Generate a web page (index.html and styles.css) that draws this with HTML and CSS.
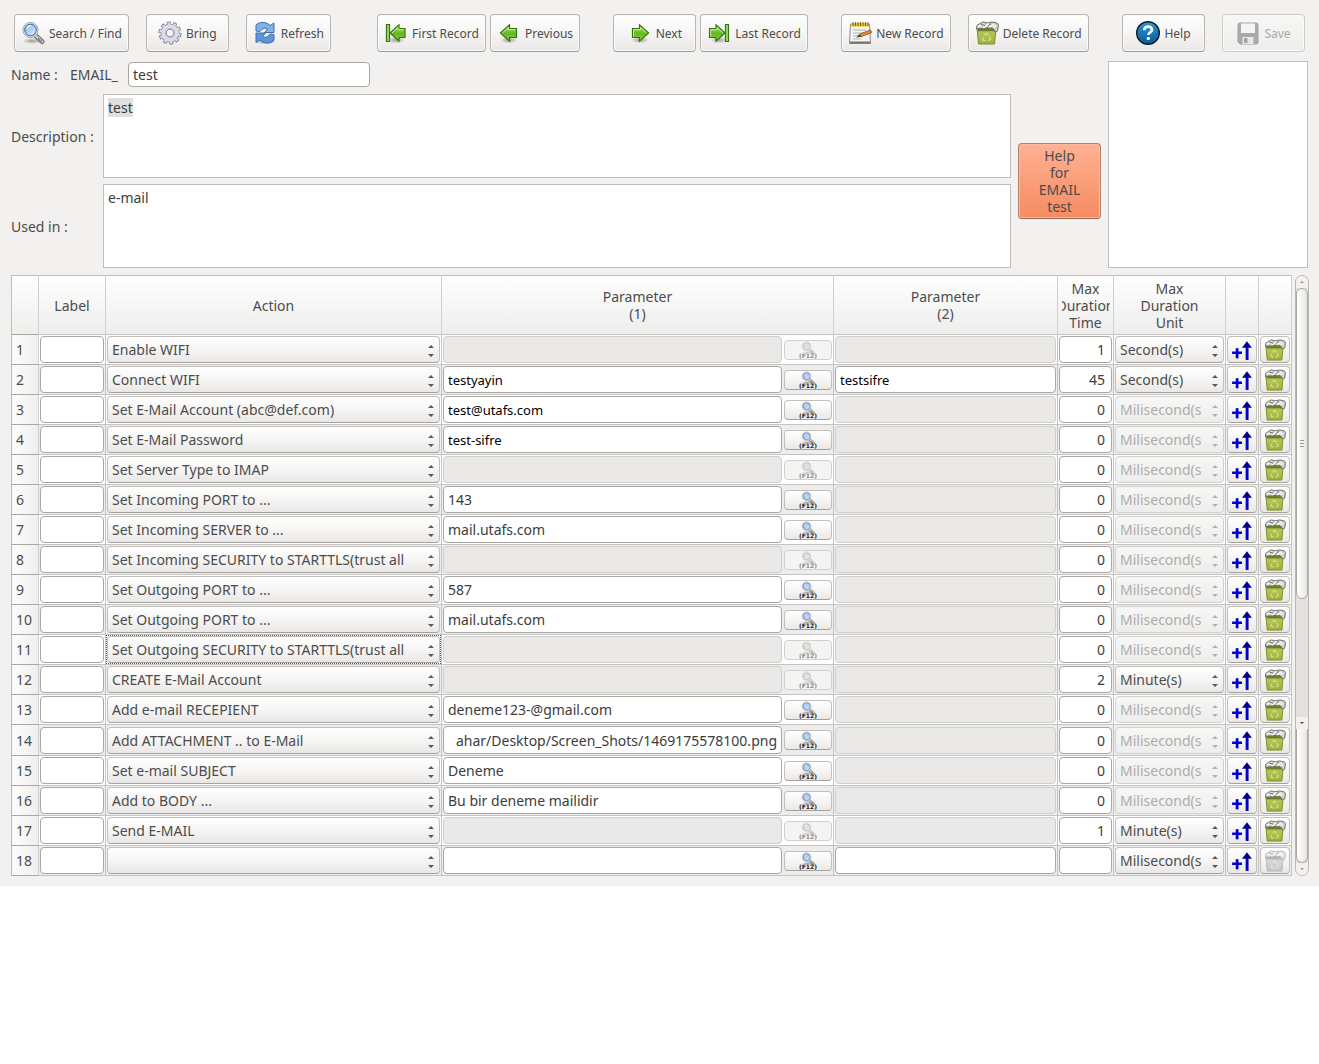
FILE: index.html
```html
<!DOCTYPE html>
<html lang="en">

<head>
    <meta charset="UTF-8">
    <meta name="viewport" content="width=device-width, initial-scale=1.0">
    <title>EMAIL_test</title>
    <link rel="stylesheet" href="styles.css">
</head>

<body>
    <svg class="sprite" aria-hidden="true">
        <defs>
            <linearGradient id="lens" x1="0" y1="0" x2="1" y2="1">
                <stop offset="0" stop-color="#7fb2ea" />
                <stop offset="1" stop-color="#e4f1ff" />
            </linearGradient>
            <linearGradient id="green" x1="0" y1="0" x2="0" y2="1">
                <stop offset="0" stop-color="#a9dc75" />
                <stop offset="0.55" stop-color="#62b81f" />
                <stop offset="1" stop-color="#8fd64e" />
            </linearGradient>
            <linearGradient id="bin" x1="0" y1="0" x2="0" y2="1">
                <stop offset="0" stop-color="#76932a" />
                <stop offset="0.3" stop-color="#b4c552" />
                <stop offset="1" stop-color="#a0b03c" />
            </linearGradient>
            <linearGradient id="blue" x1="0" y1="0" x2="0" y2="1">
                <stop offset="0" stop-color="#2c9bd8" />
                <stop offset="1" stop-color="#0a5797" />
            </linearGradient>
            <radialGradient id="shade">
                <stop offset="0" stop-color="#000" stop-opacity="0.35" />
                <stop offset="1" stop-color="#000" stop-opacity="0" />
            </radialGradient>
        </defs>
        <symbol id="search" viewBox="0 0 24 24">
            <ellipse cx="11" cy="20" rx="10" ry="3" fill="url(#shade)" />
            <path d="M14.5 14.5L21 20.5" stroke="#6e6e6e" stroke-width="5" stroke-linecap="round" />
            <path d="M14.5 14.5L21 20.5" stroke="#c4c4c4" stroke-width="3" stroke-linecap="round" />
            <path d="M17 17.5l3.5 3.2" stroke="#8b8b8b" stroke-width="2" />
            <circle cx="9.5" cy="9" r="7.6" fill="#f2f2f2" stroke="#a5a5a5" />
            <circle cx="9.5" cy="9" r="5.8" fill="url(#lens)" stroke="#4a7cb8" stroke-width="1.2" />
            <path d="M6 8a4 4 0 0 1 4-3.3" fill="none" stroke="#fff" stroke-width="1.2" />
        </symbol>
        <symbol id="gear" viewBox="0 0 24 24">
            <g fill="none">
                <circle cx="12" cy="12" r="9.4" stroke="#85859a" stroke-width="4.4" pathLength="20" stroke-dasharray="1.2 0.8" />
                <circle cx="12" cy="12" r="6.4" stroke="#85859a" stroke-width="6.4" />
                <circle cx="12" cy="12" r="6.4" stroke="#dcdce9" stroke-width="4.8" />
                <circle cx="12" cy="12" r="9.2" stroke="#dcdce9" stroke-width="2.8" pathLength="20" stroke-dasharray="0.8 1.2" stroke-dashoffset="-0.2" />
                <circle cx="12" cy="12" r="4.6" stroke="#b9b9ca" />
            </g>
        </symbol>
        <symbol id="refresh" viewBox="0 0 24 24">
            <ellipse cx="12" cy="21" rx="10" ry="2.5" fill="url(#shade)" />
            <path d="M3 10V4l2-1.500c3-1.500 7-1.500 10 .3L17 4.500 21 2v9.500h-9.500l3-3.500c-2-1.300-4-.8-5.500.3L7 10.500z" fill="#86b0e2" stroke="#3a6fb2" />
            <path d="M21 13.500v6l-2 1.500c-3 1.500-7 1.500-10-.3L7 19l-4 2.500V12h9.500l-3 3.500c2 1.300 4 .8 5.500-.3l2-2.200z" fill="#6196d6" stroke="#3a6fb2" />
        </symbol>
        <symbol id="prev" viewBox="0 0 24 24">
            <ellipse cx="12" cy="19" rx="9" ry="3.500" fill="url(#shade)" />
            <path d="M3.500 12L12.500 3.800V7.500h7v9h-7v3.700z" fill="url(#green)" stroke="#37750a" stroke-width="1.200" />
            <path d="M5.400 12l6-5.500v2.200h7" fill="none" stroke="#c9ecab" />
        </symbol>
        <symbol id="next" viewBox="0 0 24 24">
            <ellipse cx="12" cy="19" rx="9" ry="3.500" fill="url(#shade)" />
            <path d="M20.500 12L11.500 3.800V7.500h-7v9h7v3.700z" fill="url(#green)" stroke="#37750a" stroke-width="1.200" />
            <path d="M5.600 15.500V8.700h7V6.500l6 5.500" fill="none" stroke="#c9ecab" />
        </symbol>
        <symbol id="first" viewBox="0 0 24 24">
            <ellipse cx="12" cy="19" rx="9" ry="3.500" fill="url(#shade)" />
            <path d="M6 12L15 3.800V7.500h6v9h-6v3.700z" fill="url(#green)" stroke="#37750a" stroke-width="1.200" />
            <path d="M7.900 12l6-5.500v2.200h6" fill="none" stroke="#c9ecab" />
            <path d="M2.500 3.500h3v17h-3z" fill="#a5dc73" stroke="#37750a" stroke-width="1.200" />
        </symbol>
        <symbol id="last" viewBox="0 0 24 24">
            <ellipse cx="12" cy="19" rx="9" ry="3.500" fill="url(#shade)" />
            <path d="M18 12L9 3.800V7.500H2.500v9H9v3.700z" fill="url(#green)" stroke="#37750a" stroke-width="1.200" />
            <path d="M3.700 15.500V8.700h6.500V6.500l6 5.500" fill="none" stroke="#c9ecab" />
            <path d="M18.500 3.500h3v17h-3z" fill="#a5dc73" stroke="#37750a" stroke-width="1.200" />
        </symbol>
        <symbol id="new" viewBox="0 0 24 24">
            <path d="M2.500 3h19l1 19.500h-21z" fill="#f4f4f2" stroke="#8d8d89" />
            <path d="M2 21.500h20.500" stroke="#74746f" stroke-width="2" />
            <path d="M3.500 2h17v3.500h-17z" fill="#dfc12c" />
            <path d="M5 1v4M7.500 1v4M10 1v4M12.500 1v4M15 1v4M17.500 1v4M20 1v4" stroke="#8a6d00" />
            <path d="M5 9h13M5 12h9M5 15h5M5 18h8" stroke="#b4b4b0" />
            <path d="M9.500 15l3-2.300L22.500 9l1.200 2.600-10.500 4z" fill="#e08b3a" stroke="#8a4a14" stroke-width="0.800" />
            <path d="M8 16.800l4-3.300 1.200 2z" fill="#4a3a2c" />
        </symbol>
        <symbol id="trash" viewBox="0 0 24 24">
            <path d="M2 7h19l-1.500 16h-16z" fill="url(#bin)" stroke="#7c8c28" />
            <path d="M2.500 8h18l-.2 2h-17.600z" fill="#4f5f20" opacity="0.600" />
            <path d="M1.500 8L2 4.500 5 2.500l3-1.500 4 1 5-1 5 1 1.500 2-1 6-2.500 1-1-2.500-3-2z" fill="#d0d0cc" stroke="#5f5f5b" stroke-width="0.900" />
            <path d="M3 5.500l5-2 1 3 4-3.500 2 3 4-3M18 6l3-1" fill="none" stroke="#fafafa" stroke-width="1.400" />
            <path d="M6 3.500l4 1M13 5l3-2.500" stroke="#555" />
            <g fill="none" stroke="#d3dc92" stroke-width="1.300">
                <path d="M9.500 14.500l1.800-2.300 2.300 2.300" />
                <path d="M14.500 15.500l1 2.800-2.700 1.500" />
                <path d="M10.500 19.800l-2.900-.8.700-2.900" />
            </g>
        </symbol>
        <symbol id="help" viewBox="0 0 24 24">
            <circle cx="12" cy="12" r="11.300" fill="url(#blue)" stroke="#101a22" stroke-width="1.400" />
            <path d="M8.300 9.300c0-4.800 7.700-4.800 7.700-.5 0 2.700-3.700 2.700-3.700 5.200" fill="none" stroke="#fff" stroke-width="2.700" />
            <circle cx="12.300" cy="17.500" r="1.700" fill="#fff" />
        </symbol>
        <symbol id="save" viewBox="0 0 24 24">
            <path d="M2 3.500q0-1.500 1.500-1.500h17q1.500 0 1.500 1.500v18q0 1.500-1.500 1.500H4l-2-2z" fill="#666" stroke="#555" />
            <path d="M5 2.500h14v9.500H5z" fill="#f7f7f7" />
            <path d="M6.500 16h11v7h-11z" fill="#e2e2e2" />
            <path d="M8 17h3.500v5H8z" fill="#5a5a5a" />
        </symbol>
        <symbol id="insert" viewBox="0 0 20 20">
            <path d="M1 12.500h9M5.500 8.500v9" stroke="#0000d8" stroke-width="2.400" />
            <path d="M14.500 5v14" stroke="#0000d8" stroke-width="2.400" />
            <path d="M10 8l4.500-6L19 8z" fill="#00008c" />
            <path d="M6 8.500v9M15.300 8v11" stroke="#00007c" />
        </symbol>
        <symbol id="arrows" viewBox="0 0 8 14">
            <path d="M1 4l3-3 3 3zM1 10l3 3 3-3z" fill="currentColor" />
        </symbol>
    </svg>

    <main class="window">
        <div class="toolbar">
            <div class="group wide">
                <button class="btn"><svg><use href="#search" /></svg>Search / Find</button>
                <button class="btn"><svg><use href="#gear" /></svg>Bring</button>
                <button class="btn"><svg><use href="#refresh" /></svg>Refresh</button>
            </div>
            <div class="group nav">
                <button class="btn"><svg><use href="#first" /></svg>First Record</button>
                <button class="btn"><svg><use href="#prev" /></svg>Previous</button>
            </div>
            <div class="group">
                <button class="btn"><svg><use href="#next" /></svg>Next</button>
                <button class="btn"><svg><use href="#last" /></svg>Last Record</button>
            </div>
            <div class="group wide">
                <button class="btn"><svg><use href="#new" /></svg>New Record</button>
                <button class="btn"><svg><use href="#trash" /></svg>Delete Record</button>
            </div>
            <div class="group wide">
                <button class="btn"><svg><use href="#help" /></svg>Help</button>
                <button class="btn" disabled><svg><use href="#save" /></svg>Save</button>
            </div>
        </div>

        <div class="form">
            <div class="fields">
                <div class="name-row">
                    <label for="name">Name :</label>
                    <label for="name">EMAIL_</label>
                    <input class="box" type="text" id="name" value="test">
                </div>
                <div class="area-row">
                    <label for="description">Description :</label>
                    <textarea id="description">test</textarea>
                </div>
                <div class="area-row">
                    <label for="used">Used in :</label>
                    <textarea id="used">e-mail</textarea>
                </div>
            </div>
            <button class="help-for">Help<br>for<br>EMAIL<br>test</button>
            <div class="panel"></div>
        </div>

        <div class="grid">
            <table>
                <colgroup>
                    <col class="c-num">
                    <col class="c-label">
                    <col class="c-action">
                    <col>
                    <col class="c-param2">
                    <col class="c-time">
                    <col class="c-unit">
                    <col class="c-icon">
                    <col class="c-icon">
                </colgroup>
                <thead>
                    <tr>
                        <th></th>
                        <th>Label</th>
                        <th>Action</th>
                        <th>Parameter<br>(1)</th>
                        <th>Parameter<br>(2)</th>
                        <th><div class="clip"><span>Max<br>Duration<br>Time</span></div></th>
                        <th>Max<br>Duration<br>Unit</th>
                        <th></th>
                        <th></th>
                    </tr>
                </thead>
                <tbody id="rows"></tbody>
            </table>
            <div class="scroll">
                <div class="arrow up"></div>
                <div class="thumb"><i></i></div>
                <div class="track"></div>
                <div class="arrow down dark"></div>
                <div class="thumb second"></div>
                <div class="arrow down"></div>
            </div>
        </div>
    </main>

    <script src="script.js"></script>
</body>

</html>
```
FILE: styles.css
```css
* {
    margin: 0;
    padding: 0;
    box-sizing: border-box;
}

body {
    background: #fff;
    color: #4c4c4c;
    font-family: "Noto Sans", "Open Sans", sans-serif;
    font-size: 14px;
    line-height: 17px;
}

button,
input,
select,
textarea {
    font: inherit;
    color: inherit;
}

.sprite {
    position: absolute;
    width: 0;
    height: 0;
}

.window {
    background: #f2f1f0;
    padding: 14px 11px 10px;
}

.toolbar {
    display: flex;
    justify-content: space-between;
    padding: 0 3px;
    margin-bottom: 9px;
}

.group {
    display: flex;
    gap: 4px;
}

.group.wide {
    gap: 17px;
}

.group.nav {
    margin-left: 13px;
}

.btn {
    display: flex;
    align-items: center;
    justify-content: center;
    gap: 4px;
    min-width: 83px;
    height: 38px;
    padding: 0 6px;
    border: 1px solid #b9b6b2;
    border-bottom-color: #9c9994;
    border-radius: 4px;
    background: linear-gradient(#fff, #f6f5f4 50%, #e9e8e6);
    box-shadow: inset 0 0 0 1px #fafafa;
    font-size: 12px;
    white-space: nowrap;
}

.btn svg {
    flex: none;
    width: 24px;
    height: 24px;
}

.btn:disabled {
    color: #a9a7a5;
    border-color: #cfcdca;
    background: linear-gradient(#f7f7f6, #eeedec);
}

:disabled svg {
    filter: grayscale(1);
    opacity: 0.5;
}

.form {
    display: flex;
    align-items: stretch;
    gap: 7px;
    margin-bottom: 7px;
}

.fields {
    flex: 1;
    display: flex;
    flex-direction: column;
    gap: 6px;
}

.name-row {
    display: flex;
    align-items: center;
    gap: 8px;
    height: 27px;
}

.name-row label:first-child {
    width: 51px;
}

.name-row label {
    width: 50px;
}

.box {
    width: 100%;
    height: 27px;
    min-width: 0;
    padding: 0 4px;
    border: 1px solid #aaa6a2;
    border-radius: 4px;
    background: #fff;
    color: #3c3c3c;
    outline: none;
}

.name-row .box {
    width: 242px;
    height: 25px;
}

.area-row {
    display: flex;
    align-items: center;
}

.area-row label {
    width: 92px;
}

textarea {
    flex: 1;
    height: 84px;
    padding: 4px;
    border: 1px solid #c1beba;
    background: #fff;
    color: #3c3c3c;
    outline: none;
    resize: none;
}

textarea::selection {
    background: #dfdfdf;
    color: #3c3c3c;
}

.help-for {
    align-self: center;
    width: 83px;
    height: 76px;
    margin-top: 32px;
    border: 1px solid #b08070;
    border-bottom-color: #8f6a5c;
    border-radius: 4px;
    background: linear-gradient(#ffb193, #f58b62);
    box-shadow: inset 0 0 0 1px #ffb8a0;
}

.panel {
    width: 200px;
    border: 1px solid #c1beba;
    background: #fff;
}

.grid {
    display: flex;
    gap: 3px;
}

table {
    flex: 1;
    width: 100%;
    table-layout: fixed;
    border-collapse: collapse;
    border: 1px solid #c1beba;
}

.c-num {
    width: 27px;
}

.c-label {
    width: 67px;
}

.c-action {
    width: 26.25%;
}

.c-param2 {
    width: 17.5%;
}

.c-time {
    width: 56px;
}

.c-unit {
    width: 112px;
}

.c-icon {
    width: 33px;
}

th {
    font-weight: normal;
    border-right: 1px solid #d2d0ce;
}

thead tr {
    height: 59px;
    background: linear-gradient(#fff, #eeedec);
}

thead {
    border-bottom: 1px solid #aaa8a5;
}

.clip {
    display: flex;
    justify-content: center;
    width: 48px;
    margin: 0 auto;
    overflow: hidden;
}

tbody tr {
    background: #fff;
}

tbody tr:nth-child(even) {
    background: #ededed;
}

td {
    padding: 1px;
    border: 1px solid #c6c4c2;
}

tbody th {
    padding-left: 4px;
    border-bottom: 1px solid #aaa8a5;
    background: linear-gradient(90deg, #fcfcfc, #efeeed);
    text-align: left;
}

td .box {
    display: block;
}

.box:disabled {
    background: #eae9e8;
    border-color: #d0cecb;
}

.time {
    padding: 0 6px;
    text-align: right;
}

.tail {
    height: 28px;
    padding: 0 4px 0 0;
    text-align: right;
}

.edited {
    color: #000;
    font-size: 13px;
}

.param {
    display: flex;
    align-items: center;
    gap: 2px;
}

.drop {
    display: grid;
    align-items: center;
    color: #5a5a5a;
}

.drop select,
.drop svg {
    grid-area: 1 / 1;
}

.drop select {
    appearance: none;
    width: 100%;
    height: 27px;
    min-width: 0;
    padding: 0 20px 0 4px;
    border: 1px solid #c3c0bc;
    border-bottom-color: #a5a29e;
    border-radius: 4px;
    background: linear-gradient(#fff, #f6f5f4 50%, #e9e8e6);
    color: #4c4c4c;
    line-height: 23px;
    outline: none;
}

.drop svg {
    justify-self: end;
    width: 8px;
    height: 14px;
    margin: 3px 5px 0 0;
    pointer-events: none;
}

.drop select:disabled {
    border-color: #d2d0cd;
    background: linear-gradient(#f7f7f6, #eeedec);
    color: #aeacaa;
    opacity: 1;
}

.drop select:disabled + svg {
    color: #b5b3b1;
}

.drop.focus {
    outline: 1px dotted #555;
}

.f12,
.tool {
    display: flex;
    align-items: center;
    justify-content: center;
    border: 1px solid #c3c0bc;
    border-bottom-color: #a5a29e;
    border-radius: 4px;
    background: linear-gradient(#fff, #f6f5f4 50%, #e9e8e6);
}

.f12 {
    flex: none;
    flex-direction: column;
    width: 48px;
    height: 20px;
    color: #222;
    font-family: "DejaVu Sans", sans-serif;
    font-size: 6px;
    font-weight: bold;
    line-height: 6px;
}

.f12 svg {
    flex: none;
    width: 14px;
    height: 14px;
    margin-bottom: -2px;
}

.f12:disabled {
    border-color: #d2d0cd;
    background: #f4f4f3;
    color: #8a8a8a;
}

.tool {
    width: 100%;
    height: 27px;
}

.tool svg {
    flex: none;
    width: 22px;
    height: 22px;
}

.scroll {
    display: flex;
    flex-direction: column;
    align-items: center;
    width: 14px;
    margin-right: -1px;
    border: 1px solid #bbb8b4;
    border-radius: 7px;
    background: #e3e1df;
    overflow: hidden;
}

.arrow {
    display: flex;
    align-items: center;
    justify-content: center;
    width: 100%;
    height: 12px;
    background: #f2f1f0;
}

.arrow::after {
    content: "";
    border: 2px solid transparent;
}

.arrow.up::after {
    border-top: 0;
    border-bottom-color: #999;
}

.arrow.down::after {
    border-bottom: 0;
    border-top-color: #999;
}

.arrow.dark::after {
    border-top-color: #444;
}

.thumb {
    display: flex;
    flex: 312;
    align-items: center;
    justify-content: center;
    width: 12px;
    border: 1px solid #aaa7a3;
    border-radius: 6px;
    background: linear-gradient(90deg, #fff, #e6e5e3);
}

.thumb i {
    width: 4px;
    height: 7px;
    background: repeating-linear-gradient(#999 0 1px, transparent 1px 3px);
}

.track {
    flex: 119;
}

.thumb.second {
    flex: 134;
    border-top: 0;
    border-radius: 0 0 6px 6px;
}
```
FILE: script.js
```javascript
// action, parameter 1, parameter 2, time, unit (null = field is disabled)
let steps = [
    ['Enable WIFI', null, null, '1', 'Second(s)'],
    ['Connect WIFI', 'testyayin', 'testsifre', '45', 'Second(s)'],
    ['Set E-Mail Account (abc@def.com)', 'test@utafs.com', null, '0', ''],
    ['Set E-Mail Password', 'test-sifre', null, '0', ''],
    ['Set Server Type to IMAP', null, null, '0', ''],
    ['Set Incoming PORT to ...', '143', null, '0', ''],
    ['Set Incoming SERVER to ...', 'mail.utafs.com', null, '0', ''],
    ['Set Incoming SECURITY to STARTTLS(trust all', null, null, '0', ''],
    ['Set Outgoing PORT to ...', '587', null, '0', ''],
    ['Set Outgoing PORT to ...', 'mail.utafs.com', null, '0', ''],
    ['Set Outgoing SECURITY to STARTTLS(trust all', null, null, '0', ''],
    ['CREATE E-Mail Account', null, null, '2', 'Minute(s)'],
    ['Add e-mail RECEPIENT', 'deneme123-@gmail.com', null, '0', ''],
    ['Add ATTACHMENT .. to E-Mail', 'ahar/Desktop/Screen_Shots/1469175578100.png', null, '0', ''],
    ['Set e-mail SUBJECT', 'Deneme', null, '0', ''],
    ['Add to BODY ...', 'Bu bir deneme mailidir', null, '0', ''],
    ['Send E-MAIL', null, null, '1', 'Minute(s)'],
    ['', '', '', '', 'Milisecond(s']
];

let edited = ['testyayin', 'testsifre', 'test@utafs.com', 'test-sifre'];

function box(label, value, extra) {
    let cls = 'box ' + extra;
    if (edited.includes(value)) cls += ' edited';
    if (value && value.startsWith('ahar/')) cls += ' tail';
    return `<input type="text" class="${cls}" aria-label="${label}" value="${value || ''}"${value === null ? ' disabled' : ''}>`;
}

function drop(label, value, disabled, focus) {
    return `<div class="drop${focus ? ' focus' : ''}">
        <select aria-label="${label}"${disabled ? ' disabled' : ''}><option>${value}</option></select>
        <svg><use href="#arrows" /></svg>
    </div>`;
}

let html = '';
steps.forEach(function (step, i) {
    let [action, param1, param2, time, unit] = step;
    let n = i + 1;
    let last = n === steps.length;
    html += `<tr>
        <th>${n}</th>
        <td>${box('Label ' + n, '', '')}</td>
        <td>${drop('Action ' + n, action, false, n === 11)}</td>
        <td><div class="param">
            ${box('Parameter 1, row ' + n, param1, '')}
            <button class="f12"${param1 === null ? ' disabled' : ''}><svg><use href="#search" /></svg>(F12)</button>
        </div></td>
        <td>${box('Parameter 2, row ' + n, param2, '')}</td>
        <td>${box('Duration ' + n, time, 'time')}</td>
        <td>${drop('Unit ' + n, unit || 'Milisecond(s', unit === '', false)}</td>
        <td><button class="tool" aria-label="Insert row"><svg><use href="#insert" /></svg></button></td>
        <td><button class="tool" aria-label="Delete row"${last ? ' disabled' : ''}><svg><use href="#trash" /></svg></button></td>
    </tr>`;
});
document.getElementById('rows').innerHTML = html;

document.getElementById('description').select();
```
